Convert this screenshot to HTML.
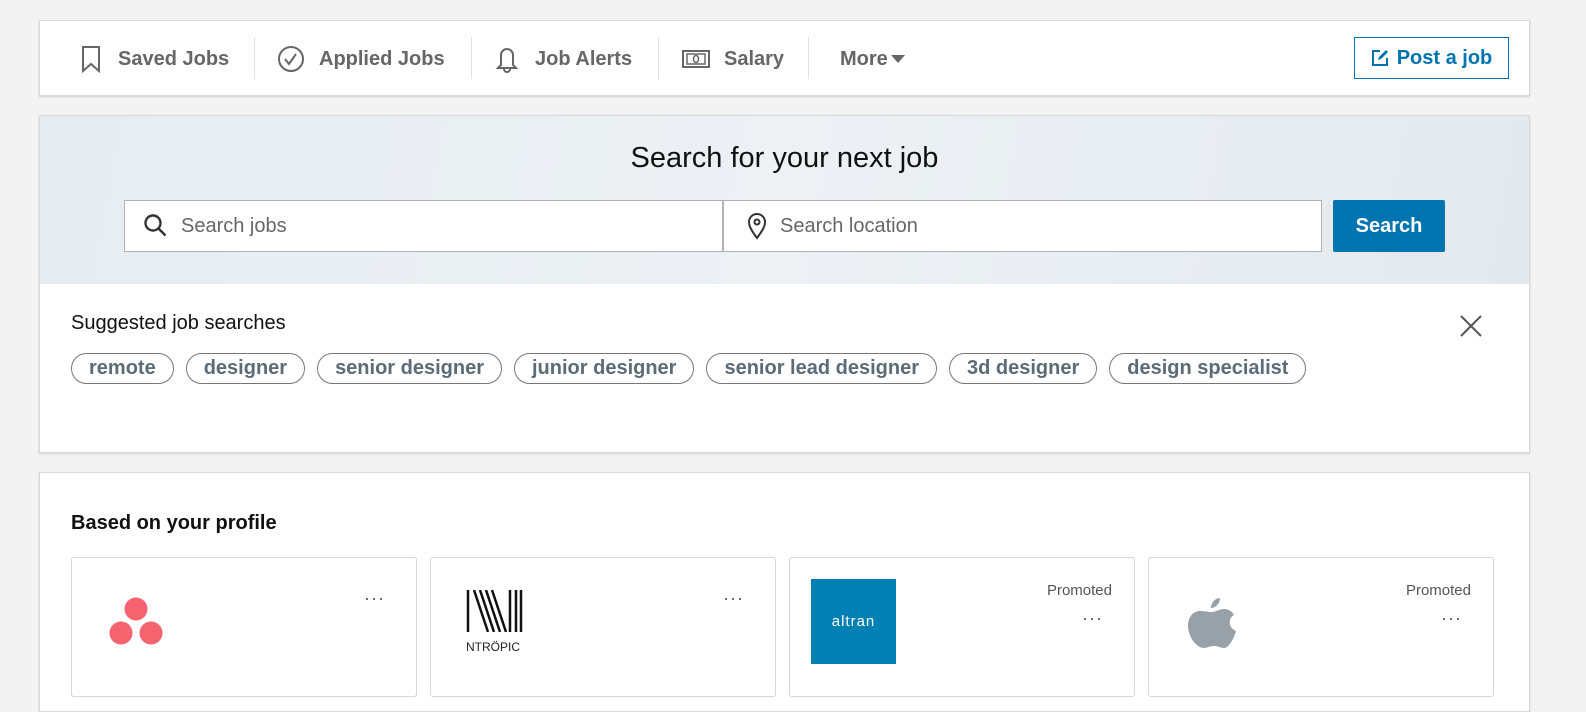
<!DOCTYPE html>
<html><head><meta charset="utf-8"><style>
*{box-sizing:border-box;margin:0;padding:0}
body{width:1586px;height:690px;background:#f3f3f3;font-family:"Liberation Sans",sans-serif;position:relative;overflow:hidden;color:#000}
.card{position:absolute;left:39px;width:1491px;background:#fff;border:1px solid #d9d9d9;box-shadow:0 1px 2px rgba(0,0,0,.15)}
.nav{top:20px;height:76px}
.ni{position:absolute;top:0;height:76px;display:flex;align-items:center;font-size:20px;font-weight:bold;color:#666}
.sep{position:absolute;top:16px;width:1px;height:42px;background:#e0e0e0}
.post{position:absolute;left:1314px;top:16px;width:155px;height:42px;border:1px solid #0073b1;color:#0073b1;font-weight:bold;font-size:20px;display:flex;align-items:center;justify-content:center;gap:8px}
.hero{position:absolute;left:0;top:0;width:100%;height:168px;background:linear-gradient(100deg,#e6ecf0,#edf1f4 50%,#e3e9ee)}
.inp{position:absolute;top:84px;height:52px;background:#fff;border:1px solid #b3b3b3;font-size:20px;color:#666;display:flex;align-items:center}
.pill{display:inline-block;border:1px solid #777;border-radius:16px;height:31px;line-height:29px;padding:0 17px;font-size:20px;font-weight:bold;color:#5b6b78;margin-right:12px}
.jc{position:absolute;top:84px;width:346px;height:140px;border:1px solid #d6d6d6;border-radius:3px;background:#fff}
.dots{position:absolute;font-size:18px;color:#555;letter-spacing:1px}
.prom{position:absolute;right:22px;top:24px;font-size:15px;color:#555}
</style></head><body>
<div class="card nav">
 <div class="ni" style="left:40px"><svg width="22" height="28" viewBox="0 0 22 28" style="margin-right:16px"><path d="M3 2h16v24l-8-7-8 7z" fill="none" stroke="#666" stroke-width="2"/></svg>Saved Jobs</div>
 <div class="sep" style="left:214px"></div>
 <div class="ni" style="left:237px"><svg width="28" height="28" viewBox="0 0 28 28" style="margin-right:14px"><circle cx="14" cy="14" r="12" fill="none" stroke="#666" stroke-width="2"/><path d="M8 14l4 5 7-10" fill="none" stroke="#666" stroke-width="2"/></svg>Applied Jobs</div>
 <div class="sep" style="left:431px"></div>
 <div class="ni" style="left:455px"><svg width="24" height="28" viewBox="0 0 24 28" style="margin-right:16px"><path d="M6 20V10a6 6 0 0112 0v10l3 3H3z M9 24a3 3 0 006 0" fill="none" stroke="#666" stroke-width="2"/></svg>Job Alerts</div>
 <div class="sep" style="left:618px"></div>
 <div class="ni" style="left:642px"><svg width="28" height="20" viewBox="0 0 28 20" style="margin-right:14px"><rect x="1" y="2" width="26" height="16" fill="none" stroke="#666" stroke-width="2"/><rect x="5" y="5" width="18" height="10" fill="none" stroke="#666" stroke-width="1.5"/><ellipse cx="14" cy="10" rx="2.5" ry="3.5" fill="none" stroke="#666" stroke-width="1.5"/></svg>Salary</div>
 <div class="sep" style="left:768px"></div>
 <div class="ni" style="left:800px">More<svg width="16" height="10" viewBox="0 0 16 10" style="margin-left:2px"><path d="M1 1h14l-7 8z" fill="#666"/></svg></div>
 <div class="post"><svg width="18" height="18" viewBox="0 0 18 18"><path d="M9 2H2v14h14V9" fill="none" stroke="#0073b1" stroke-width="2"/><path d="M7 11l1-3 7-7 2 2-7 7z" fill="#0073b1"/></svg>Post a job</div>
</div>
<div class="card" style="top:115px;height:338px">
 <div class="hero"></div>
 <div style="position:absolute;top:26px;width:100%;text-align:center;font-size:29px;color:#111">Search for your next job</div>
 <div class="inp" style="left:84px;width:599px"><svg width="26" height="26" viewBox="0 0 26 26" style="margin:0 12px 0 18px"><circle cx="10" cy="10" r="7.5" fill="none" stroke="#333" stroke-width="2.4"/><path d="M15.5 15.5l7 7" stroke="#333" stroke-width="2.6"/></svg>Search jobs</div>
 <div class="inp" style="left:683px;width:599px"><svg width="22" height="28" viewBox="0 0 22 28" style="margin:0 12px 0 22px"><path d="M11 26C5 18 3 14 3 10a8 8 0 0116 0c0 4-2 8-8 16z" fill="none" stroke="#333" stroke-width="2"/><circle cx="11" cy="10" r="2.5" fill="none" stroke="#333" stroke-width="2"/></svg>Search location</div>
 <div style="position:absolute;left:1293px;top:84px;width:112px;height:52px;background:#0073b1;color:#fff;font-weight:bold;font-size:20px;display:flex;align-items:center;justify-content:center;border-radius:2px">Search</div>
 <div style="position:absolute;left:31px;top:196px;font-size:20px;color:#111">Suggested job searches</div>
 <svg width="24" height="24" viewBox="0 0 24 24" style="position:absolute;left:1419px;top:198px"><path d="M2 2l20 20M22 2L2 22" stroke="#555" stroke-width="2"/></svg>
 <div style="position:absolute;left:31px;top:237px;white-space:nowrap"><span class="pill">remote</span><span class="pill">designer</span><span class="pill">senior designer</span><span class="pill">junior designer</span><span class="pill">senior lead designer</span><span class="pill">3d designer</span><span class="pill">design specialist</span></div>
</div>
<div class="card" style="top:472px;height:240px">
 <div style="position:absolute;left:31px;top:39px;font-size:20px;font-weight:bold;color:#111">Based on your profile</div>
 <div class="jc" style="left:31px">
  <svg width="56" height="52" viewBox="0 0 56 52" style="position:absolute;left:36px;top:38px"><circle cx="28" cy="13" r="11.5" fill="#f5636f"/><circle cx="13" cy="37" r="11.5" fill="#f5636f"/><circle cx="43" cy="37" r="11.5" fill="#f5636f"/></svg>
  <div class="dots" style="left:292px;top:30px">···</div></div>
 <div class="jc" style="left:390px">
  <svg width="58" height="42" viewBox="0 0 58 42" style="position:absolute;left:34px;top:32px"><g stroke="#111" stroke-width="2.5"><path d="M3 0v42M9 0l14 42M15 0l14 42M21 0l14 42M27 0l14 42M45 0v42M51 0v42M56 0v42"/></g></svg>
  <div style="position:absolute;left:35px;top:82px;font-size:12px;color:#222">NTRÖPIC</div>
  <div class="dots" style="left:292px;top:30px">···</div></div>
 <div class="jc" style="left:749px">
  <div style="position:absolute;left:21px;top:21px;width:85px;height:85px;background:#0080b3;color:#fff;font-size:15px;display:flex;align-items:center;justify-content:center;letter-spacing:1px">altran</div>
  <div class="prom">Promoted</div><div class="dots" style="left:292px;top:50px">···</div></div>
 <div class="jc" style="left:1108px">
  <svg width="52" height="62" viewBox="0 0 52 62" style="position:absolute;left:37px;top:36px"><path d="M34 4c0 6-5 10-9 10 0-5 4-10 9-10zM26 18c4 0 7-3 12-3 4 0 8 2 10 6-6 3-6 13 2 16-2 7-7 17-12 17-4 0-5-2-10-2s-7 2-10 2C10 54 2 42 2 32c0-10 6-15 12-15 5 0 8 1 12 1z" fill="#98a0a8"/></svg>
  <div class="prom">Promoted</div><div class="dots" style="left:292px;top:50px">···</div></div>
</div>
</body></html>
